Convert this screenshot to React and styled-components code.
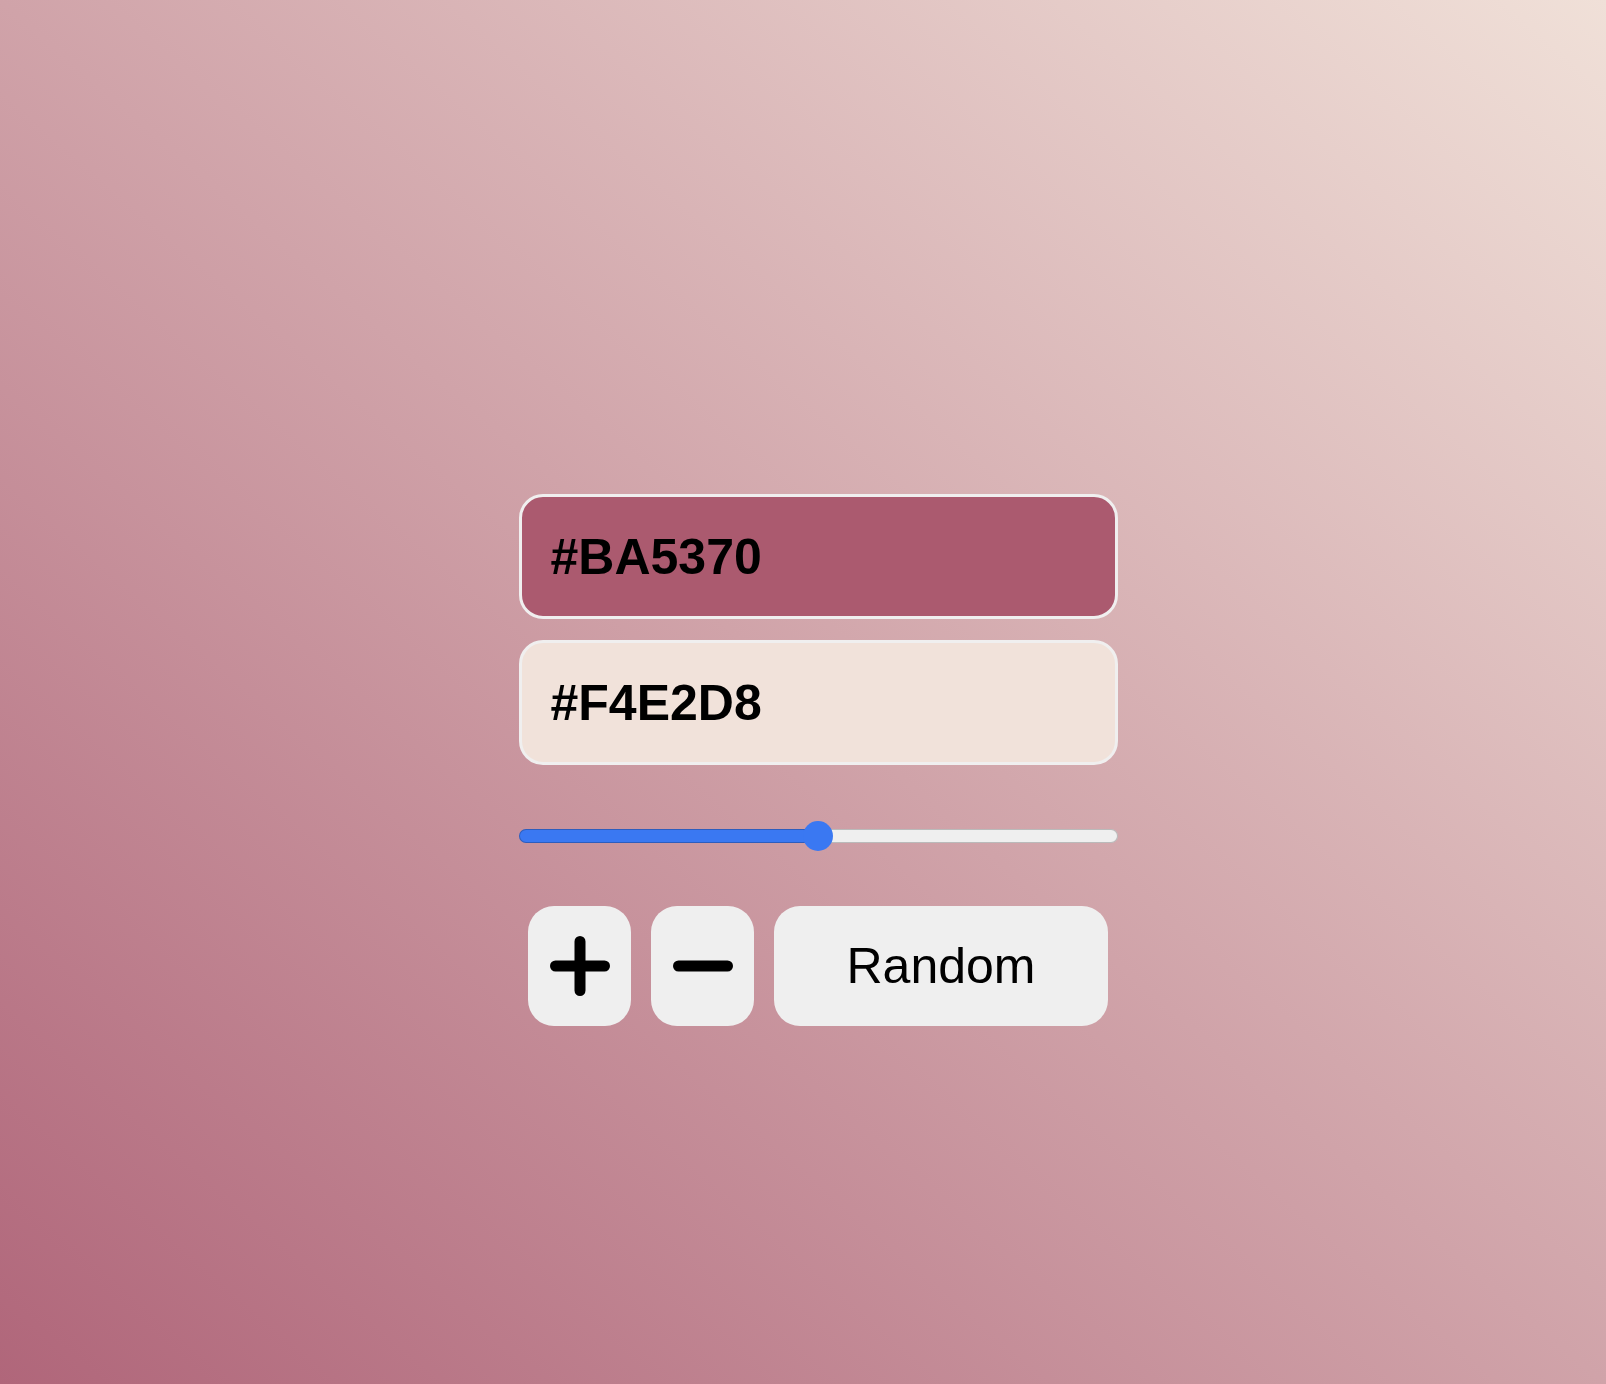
import React, { useState } from 'react';
import styled, { createGlobalStyle } from 'styled-components';

const GlobalStyle = createGlobalStyle`
  html, body {
    margin: 0;
    padding: 0;
  }
  body {
    font-family: "Liberation Sans", Arial, sans-serif;
  }
`;

const Page = styled.div`
  min-height: 100vh;
  box-sizing: border-box;
  background: linear-gradient(to top right, #b0667a, #f0e0d8);
  display: flex;
  justify-content: center;
  padding: 494px 0 0 30px;
`;

const Panel = styled.div`
  width: 599px;
  display: flex;
  flex-direction: column;
`;

const HexField = styled.input`
  box-sizing: border-box;
  width: 100%;
  height: 125px;
  padding: 0 29px;
  border: 3px solid #f0efef;
  border-radius: 24px;
  background: ${props => props.$bg};
  color: #000;
  font-family: "Liberation Sans", Arial, sans-serif;
  font-size: 50px;
  font-weight: 700;
  outline: none;

  & + & {
    margin-top: 21px;
  }
`;

const Slider = styled.input`
  -webkit-appearance: none;
  appearance: none;
  width: 100%;
  height: 30px;
  margin: 56px 0 0;
  padding: 0;
  background: transparent;

  &::-webkit-slider-runnable-track {
    height: 14px;
    border-radius: 7px;
    background: linear-gradient(
      to right,
      #3a78f2 0,
      #3a78f2 ${props => props.$fill}%,
      #efefef ${props => props.$fill}%,
      #efefef 100%
    );
    box-shadow: inset 0 0 0 1px rgba(0, 0, 0, 0.22);
  }

  &::-webkit-slider-thumb {
    -webkit-appearance: none;
    appearance: none;
    width: 30px;
    height: 30px;
    margin-top: -8px;
    border: none;
    border-radius: 50%;
    background: #3a78f2;
  }
`;

const ButtonRow = styled.div`
  display: flex;
  justify-content: center;
  gap: 20px;
  margin-top: 55px;
`;

const ActionButton = styled.button`
  width: ${props => (props.$wide ? '334px' : '103px')};
  height: 120px;
  display: flex;
  align-items: center;
  justify-content: center;
  padding: 0;
  border: none;
  border-radius: 26px;
  background: #efefef;
  color: #000;
  font-family: "Liberation Sans", Arial, sans-serif;
  font-size: 50px;
  cursor: pointer;
`;

const PlusIcon = () => (
  <svg width="60" height="60" viewBox="0 0 60 60">
    <path d="M5.5 30h49M30 5.5v49" stroke="#000" strokeWidth="11" strokeLinecap="round" fill="none" />
  </svg>
);

const MinusIcon = () => (
  <svg width="60" height="60" viewBox="0 0 60 60">
    <path d="M5.5 30h49" stroke="#000" strokeWidth="11" strokeLinecap="round" fill="none" />
  </svg>
);

const App = () => {
  const [mix, setMix] = useState(50);

  return (
    <>
      <GlobalStyle />
      <Page>
        <Panel>
          <HexField $bg="#ab5a6f" value="#BA5370" readOnly />
          <HexField $bg="#f1e2da" value="#F4E2D8" readOnly />
          <Slider
            type="range"
            min="0"
            max="100"
            value={mix}
            $fill={mix}
            onChange={e => setMix(Number(e.target.value))}
          />
          <ButtonRow>
            <ActionButton aria-label="add"><PlusIcon /></ActionButton>
            <ActionButton aria-label="remove"><MinusIcon /></ActionButton>
            <ActionButton $wide>Random</ActionButton>
          </ButtonRow>
        </Panel>
      </Page>
    </>
  );
};

export default App;
